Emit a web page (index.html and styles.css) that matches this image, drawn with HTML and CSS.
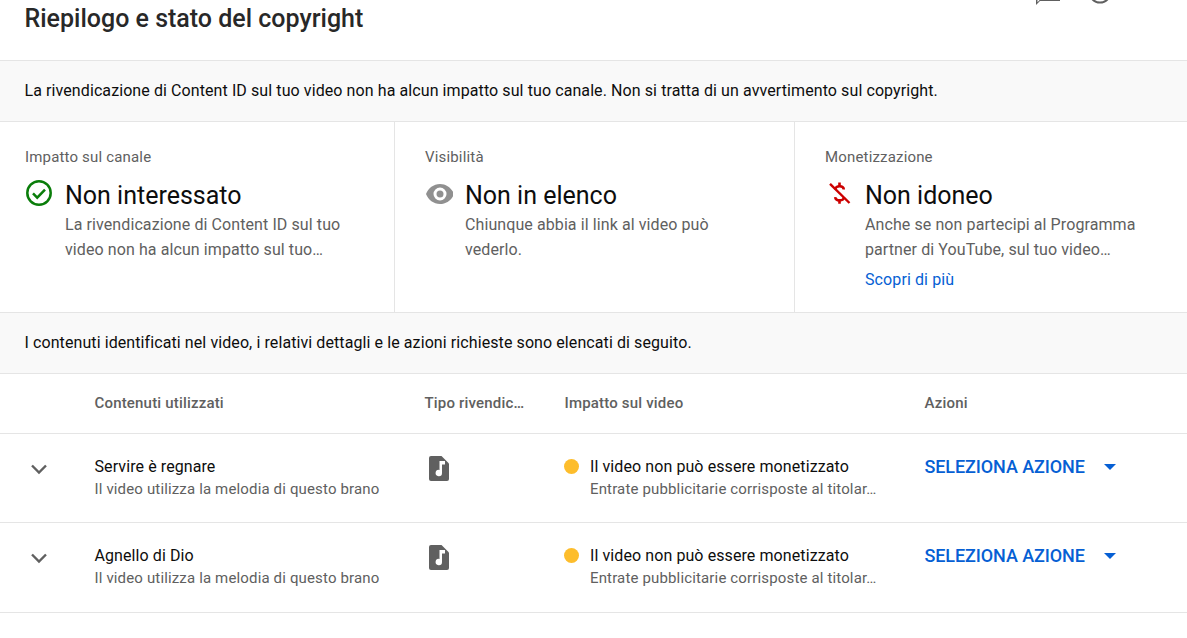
FILE: index.html
```html
<!DOCTYPE html>
<html lang="it">
<head>
<meta charset="utf-8">
<title>Riepilogo e stato del copyright</title>
<link rel="stylesheet" href="styles.css">
</head>
<body>
<header class="top">
  <h1 class="title">Riepilogo e stato del copyright</h1>
  <div class="top-icons">
    <svg class="top-icon" viewBox="0 0 24 24"><path fill="#606060" fill-rule="evenodd" d="M24 0H0v22l4-4h20V0zm-1 17H3.600L1.500 19.200V1h21.500v16z"/></svg>
    <svg class="top-icon help" viewBox="0 0 24 24"><circle cx="12" cy="12" r="10.500" fill="none" stroke="#606060" stroke-width="2"/></svg>
  </div>
</header>
<div class="banner">La rivendicazione di Content ID sul tuo video non ha alcun impatto sul tuo canale. Non si tratta di un avvertimento sul copyright.</div>
<section class="cards">
  <div class="card">
    <div class="card-label">Impatto sul canale</div>
    <div class="card-main">
      <svg class="card-icon" viewBox="0 0 28 28"><circle cx="14" cy="14" r="11.700" fill="none" stroke="#0a7d0a" stroke-width="2.500"/><path d="M8 14.400l4.200 4.200 7.800-8" fill="none" stroke="#0a7d0a" stroke-width="2.500"/></svg>
      <div class="card-body">
        <div class="card-value">Non interessato</div>
        <div class="card-desc">La rivendicazione di Content ID sul tuo<br>video non ha alcun impatto sul tuo…</div>
      </div>
    </div>
  </div>
  <div class="card">
    <div class="card-label">Visibilità</div>
    <div class="card-main">
      <svg class="card-icon" viewBox="-1 -1 28 28"><path fill="#909090" fill-rule="evenodd" d="M14 4C7.600 4 2.200 8.200 0 14c2.200 5.800 7.600 10 14 10s11.800-4.200 14-10C25.800 8.200 20.400 4 14 4zm0 16.500a6.500 6.500 0 1 1 0-13 6.500 6.500 0 0 1 0 13zm0-3a3.500 3.500 0 1 0 0-7 3.500 3.500 0 0 0 0 7z"/></svg>
      <div class="card-body">
        <div class="card-value">Non in elenco</div>
        <div class="card-desc">Chiunque abbia il link al video può<br>vederlo.</div>
      </div>
    </div>
  </div>
  <div class="card">
    <div class="card-label">Monetizzazione</div>
    <div class="card-main">
      <svg class="card-icon" viewBox="-0.500 0 28 28"><path fill="none" stroke="#cc0000" stroke-width="2.600" d="M9.800 10.600c0-2.300 2-3.400 4.400-3.400 2.300 0 4 1.200 4.100 3.300M18.500 18c-.2 2.300-2 3.400-4.400 3.400-2.400 0-4.200-1.200-4.400-3.300"/><path fill="none" stroke="#cc0000" stroke-width="2.600" d="M14 3.500v3.700M14 21.200v3.500"/><path stroke="#cc0000" stroke-width="2.400" d="M4.500 4.800L24 24"/></svg>
      <div class="card-body">
        <div class="card-value">Non idoneo</div>
        <div class="card-desc">Anche se non partecipi al Programma<br>partner di YouTube, sul tuo video…</div>
        <a class="card-link" href="#">Scopri di più</a>
      </div>
    </div>
  </div>
</section>
<div class="banner">I contenuti identificati nel video, i relativi dettagli e le azioni richieste sono elencati di seguito.</div>
<section class="table">
  <div class="row head">
    <div class="c-exp"></div>
    <div class="c-content">Contenuti utilizzati</div>
    <div class="c-type">Tipo rivendic…</div>
    <div class="c-impact">Impatto sul video</div>
    <div class="c-action">Azioni</div>
  </div>
  <div class="row item">
    <div class="c-exp"><svg class="chev" viewBox="0 0 24 24"><path d="M5 8.500l7 7 7-7" fill="none" stroke="#606060" stroke-width="2.400"/></svg></div>
    <div class="c-content"><div class="line1">Servire è regnare</div><div class="line2">Il video utilizza la melodia di questo brano</div></div>
    <div class="c-type"><svg class="note" viewBox="0 0 20 25"><path fill="#606060" d="M2 0h10.500L20 7.500V23a2 2 0 0 1-2 2H2a2 2 0 0 1-2-2V2a2 2 0 0 1 2-2z"/><path fill="#fff" d="M10.500 5h5.500v3.500h-3V17a3.200 3.200 0 1 1-2.500-3.100z"/></svg></div>
    <div class="c-impact"><span class="dot"></span><div><div class="line1">Il video non può essere monetizzato</div><div class="line2">Entrate pubblicitarie corrisposte al titolar…</div></div></div>
    <div class="c-action"><span class="action">SELEZIONA AZIONE</span><span class="caret"></span></div>
  </div>
  <div class="row item">
    <div class="c-exp"><svg class="chev" viewBox="0 0 24 24"><path d="M5 8.500l7 7 7-7" fill="none" stroke="#606060" stroke-width="2.400"/></svg></div>
    <div class="c-content"><div class="line1">Agnello di Dio</div><div class="line2">Il video utilizza la melodia di questo brano</div></div>
    <div class="c-type"><svg class="note" viewBox="0 0 20 25"><path fill="#606060" d="M2 0h10.500L20 7.500V23a2 2 0 0 1-2 2H2a2 2 0 0 1-2-2V2a2 2 0 0 1 2-2z"/><path fill="#fff" d="M10.500 5h5.500v3.500h-3V17a3.200 3.200 0 1 1-2.500-3.100z"/></svg></div>
    <div class="c-impact"><span class="dot"></span><div><div class="line1">Il video non può essere monetizzato</div><div class="line2">Entrate pubblicitarie corrisposte al titolar…</div></div></div>
    <div class="c-action"><span class="action">SELEZIONA AZIONE</span><span class="caret"></span></div>
  </div>
</section>
</body>
</html>
```
FILE: styles.css
```css
* { box-sizing: border-box; }
html, body { margin: 0; padding: 0; height: 638px; overflow: hidden; background: #fff; }
body { font-family: Roboto, "Liberation Sans", sans-serif; font-size: 15px; color: #0d0d0d; }
.top { height: 61px; border-bottom: 1px solid #e5e5e5; display: flex; justify-content: space-between; padding: 0 0 0 24.500px; overflow: hidden; position: relative; }
.title { margin: 0; padding-top: 4px; font-size: 25px; line-height: 30px; font-weight: 500; color: #282828; }
.top-icons { display: flex; gap: 28px; position: absolute; left: 1036px; top: -17px; }
.top-icon { width: 24px; height: 24px; display: block; }
.help { margin-top: -3.500px; }
.banner { height: 61px; background: #f9f9f9; border-bottom: 1px solid #e5e5e5; padding: 0 24.500px 2px; display: flex; align-items: center; font-size: 16px; letter-spacing: .09px; color: #0d0d0d; }
.cards { display: grid; grid-template-columns: 395px 400px 1fr; height: 191px; border-bottom: 1px solid #e5e5e5; }
.card { padding: 27px 25px 0; border-right: 1px solid #e5e5e5; }
.card:nth-child(2) { padding-left: 30px; }
.card:last-child { border-right: 0; padding-left: 30px; }
.card-label { font-size: 15px; letter-spacing: .17px; line-height: 16px; color: #606060; }
.card-main { display: flex; margin-top: 8px; }
.card-icon { width: 28px; height: 28px; flex: none; margin-top: 6px; margin-right: 12px; }
.card-value { font-size: 25px; line-height: 28px; padding-top: 8.500px; color: #0d0d0d; }
.card-desc { font-size: 16px; letter-spacing: .09px; line-height: 25px; color: #606060; margin-top: 2.500px; }
.card-link { display: block; font-size: 16px; letter-spacing: .1px; line-height: 25px; margin-top: 5px; color: #065fd4; text-decoration: none; }
.row { display: flex; border-bottom: 1px solid #e5e5e5; }
.head { height: 60px; align-items: center; font-weight: 500; letter-spacing: .18px; color: #606060; padding-bottom: 2px; }
.item { height: 89px; align-items: flex-start; padding-top: 24px; }
.item:last-child { height: 90px; }
.c-exp { width: 94.500px; flex: none; padding-left: 27px; }
.c-content { width: 330px; flex: none; }
.c-type { width: 140px; flex: none; }
.c-impact { width: 360px; flex: none; display: flex; }
.c-action { flex: none; display: flex; align-items: center; }
.chev { width: 24px; height: 24px; display: block; margin-top: -1px; }
.note { width: 20px; height: 25px; display: block; margin-top: -2px; margin-left: 4.500px; }
.line1 { font-size: 16px; letter-spacing: .09px; line-height: 18px; color: #0d0d0d; }
.line2 { font-size: 15px; letter-spacing: .15px; line-height: 18px; margin-top: 4px; color: #606060; }
.dot { width: 15px; height: 15px; border-radius: 50%; background: #fdbd2c; margin: 1px 11px 0 -.5px; flex: none; }
.action { font-size: 18px; letter-spacing: -.1px; line-height: 18px; font-weight: 500; color: #065fd4; }
.caret { width: 0; height: 0; border: 6.500px solid transparent; border-top: 6.500px solid #065fd4; border-bottom: 0; margin-left: 19px; }
```
